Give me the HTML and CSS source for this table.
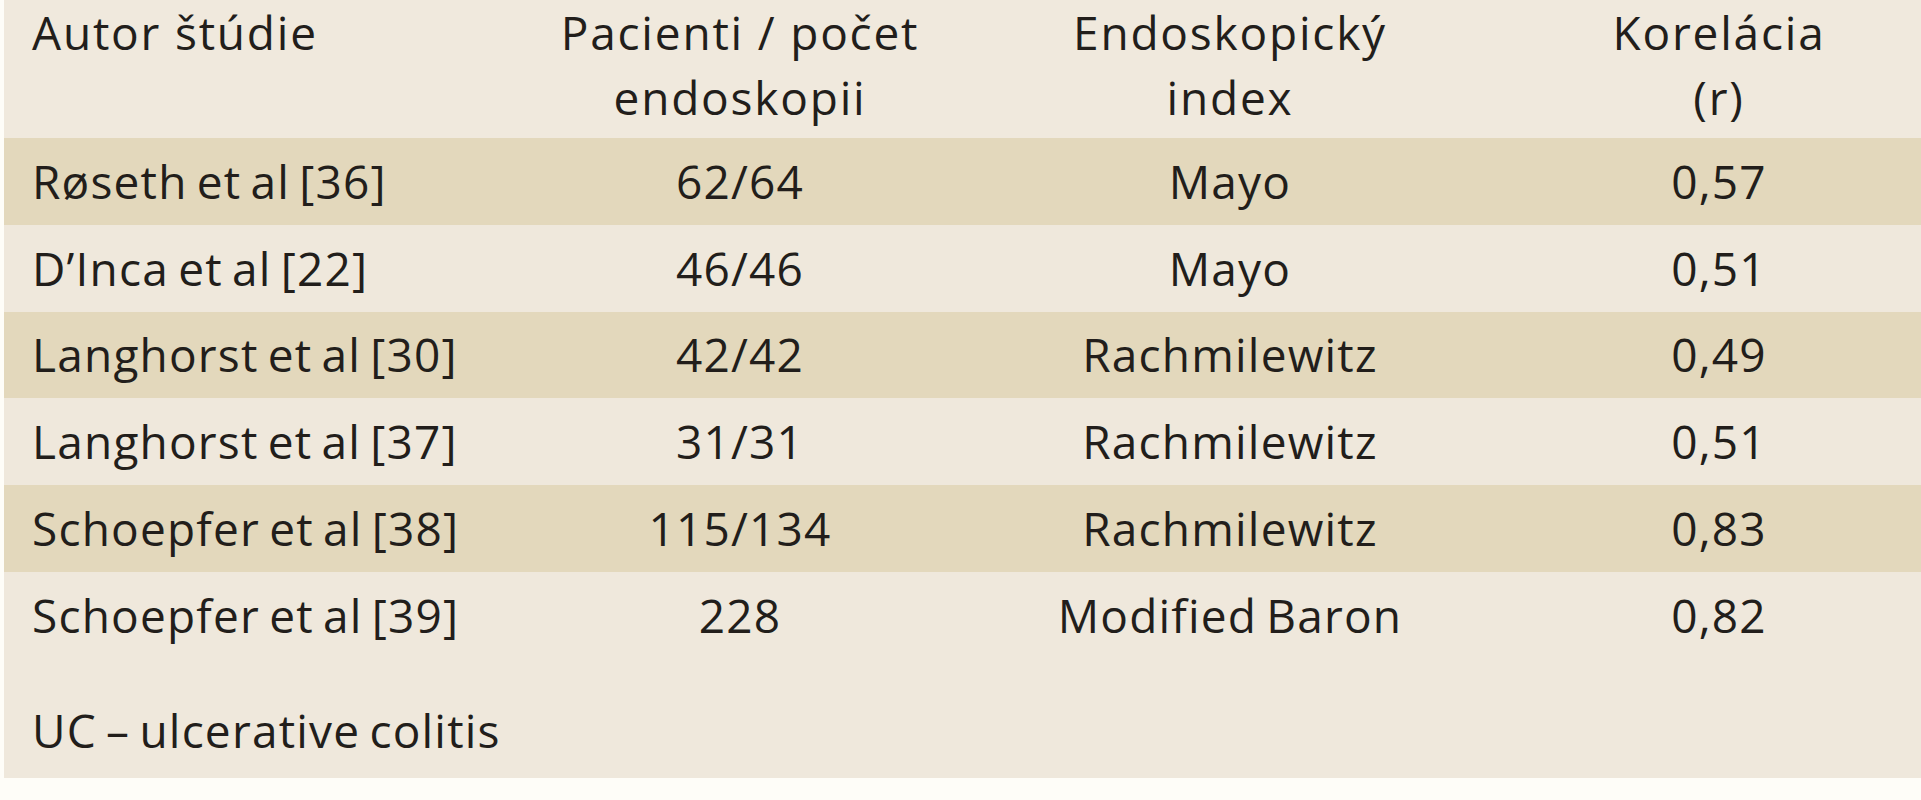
FILE: index.html
```html
<!DOCTYPE html>
<html lang="sk">
<head>
<meta charset="utf-8">
<title>Korelácia</title>
<link rel="stylesheet" href="styles.css">
</head>
<body>
<div class="page">
  <div class="sheet">
    <div class="row head">
      <div class="cell first">Autor štúdie</div>
      <div class="cell">Pacienti / počet<br>endoskopii</div>
      <div class="cell">Endoskopický<br>index</div>
      <div class="cell">Korelácia<br>(r)</div>
    </div>
    <div class="row shade">
      <div class="cell first">Røseth et al [36]</div>
      <div class="cell">62/64</div>
      <div class="cell">Mayo</div>
      <div class="cell">0,57</div>
    </div>
    <div class="row">
      <div class="cell first">D’Inca et al [22]</div>
      <div class="cell">46/46</div>
      <div class="cell">Mayo</div>
      <div class="cell">0,51</div>
    </div>
    <div class="row shade">
      <div class="cell first">Langhorst et al [30]</div>
      <div class="cell">42/42</div>
      <div class="cell">Rachmilewitz</div>
      <div class="cell">0,49</div>
    </div>
    <div class="row">
      <div class="cell first">Langhorst et al [37]</div>
      <div class="cell">31/31</div>
      <div class="cell">Rachmilewitz</div>
      <div class="cell">0,51</div>
    </div>
    <div class="row shade">
      <div class="cell first">Schoepfer et al [38]</div>
      <div class="cell">115/134</div>
      <div class="cell">Rachmilewitz</div>
      <div class="cell">0,83</div>
    </div>
    <div class="row">
      <div class="cell first">Schoepfer et al [39]</div>
      <div class="cell">228</div>
      <div class="cell">Modified Baron</div>
      <div class="cell">0,82</div>
    </div>
    <div class="foot">UC – ulcerative colitis</div>
  </div>
</div>
</body>
</html>
```
FILE: styles.css
```css
html, body {
  margin: 0;
  padding: 0;
  background: #fefdf8;
}

.page {
  width: 1921px;
  height: 800px;
  overflow: hidden;
  padding-left: 4px;
  box-sizing: border-box;
}

.sheet {
  width: 1964px;
  background: #efe8dc;
  font-family: "Open Sans", "Noto Sans", sans-serif;
  font-size: 46px;
  line-height: 65px;
  letter-spacing: 1.2px;
  word-spacing: -4px;
  color: #221e1b;
}

.row {
  display: grid;
  grid-template-columns: 489px 494px 486px 492px;
  height: 86.75px;
  align-items: center;
}

.row.head {
  height: 138px;
  align-items: start;
  background: #f0e9dd;
  letter-spacing: 1.8px;
  word-spacing: 0;
}

.row.shade {
  background: #e3d8bc;
}

.cell {
  text-align: center;
  white-space: nowrap;
}

.cell.first {
  text-align: left;
  padding-left: 28px;
}

.foot {
  height: 119.5px;
  box-sizing: border-box;
  padding: 39px 0 0 28px;
}
```
